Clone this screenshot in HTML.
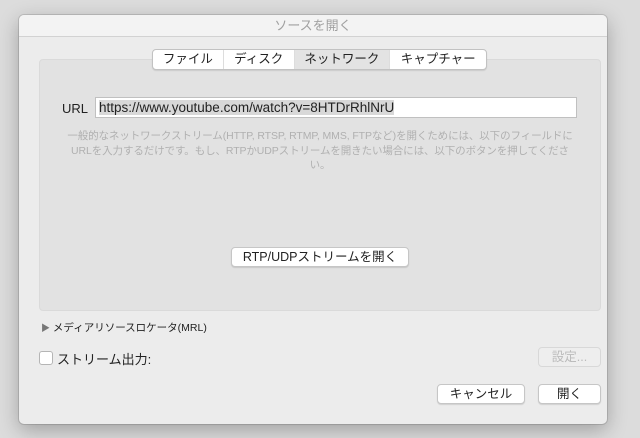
<!DOCTYPE html>
<html><head><meta charset="utf-8"><style>
*{margin:0;padding:0;box-sizing:border-box}
body{width:640px;height:438px;background:#dcdcdc;font-family:"Liberation Sans","Noto Sans CJK JP",sans-serif;position:relative;overflow:hidden}
.win{position:absolute;left:19px;top:15px;width:588px;height:409px;background:#ececec;border-radius:5px;box-shadow:0 6px 20px rgba(0,0,0,.28),0 0 0 1px rgba(0,0,0,.12)}
.title{position:absolute;left:0;top:0;width:588px;height:22px;border-bottom:1px solid #d2d2d2;background:#f3f3f3;border-radius:5px 5px 0 0;text-align:center;font-size:13px;color:#a0a0a0;line-height:22px}
.group{position:absolute;left:20px;top:44px;width:562px;height:252px;background:#e2e2e2;border-radius:4px;border:1px solid #dadada}
.tabs{position:absolute;left:133px;top:34px;width:335px;height:21px;background:#fff;border:1px solid #c2c2c2;border-radius:4px;display:flex;font-size:12.5px;overflow:hidden;box-shadow:0 1px 1px rgba(0,0,0,.1)}
.tabs div{text-align:center;line-height:19px;border-right:1px solid #ddd;color:#222}
.abs{position:absolute}
.btn{position:absolute;background:#fff;border:1px solid #c6c6c6;border-radius:4px;font-size:12.5px;text-align:center;line-height:18px;color:#222;box-shadow:0 1px 1px rgba(0,0,0,.12)}
.help{position:absolute;left:36px;width:530px;top:114px;text-align:center;font-size:10.5px;color:#b0b0b0;line-height:14.5px;letter-spacing:-0.1px}
</style></head><body>
<div class="win">
<div class="title">ソースを開く</div>
<div class="group"></div>
<div class="tabs"><div style="width:71px">ファイル</div><div style="width:71px">ディスク</div><div style="width:96px;background:#e3e3e3">ネットワーク</div><div style="width:96px;border:0">キャプチャー</div></div>
<div class="abs" style="left:43px;top:86px;font-size:13px;color:#222">URL</div>
<div class="abs" style="left:76px;top:82px;width:482px;height:21px;background:#fff;border:1px solid #c0c0c0;font-size:13.5px;line-height:19px;padding-left:3px"><span style="background:#d8d8d8;color:#222">https://www.youtube.com/watch?v=8HTDrRhlNrU</span></div>
<div class="help">一般的なネットワークストリーム(HTTP, RTSP, RTMP, MMS, FTPなど)を開くためには、以下のフィールドに<br>URLを入力するだけです。もし、RTPかUDPストリームを開きたい場合には、以下のボタンを押してくださ<br>い。</div>
<div class="btn" style="left:212px;top:232px;width:178px;height:20px">RTP/UDPストリームを開く</div>
<div class="abs" style="left:22px;top:305px;font-size:10.5px;color:#222"><span style="color:#777;font-size:9px">▶</span> メディアリソースロケータ(MRL)</div>
<div class="abs" style="left:20px;top:336px;width:14px;height:14px;background:#fff;border:1px solid #b5b5b5;border-radius:3px"></div>
<div class="abs" style="left:38px;top:334px;font-size:13px;color:#222">ストリーム出力:</div>
<div class="btn" style="left:519px;top:332px;width:63px;height:20px;color:#bbb;background:#eee;border-color:#d8d8d8;box-shadow:none">設定...</div>
<div class="btn" style="left:418px;top:369px;width:88px;height:20px">キャンセル</div>
<div class="btn" style="left:519px;top:369px;width:63px;height:20px">開く</div>
</div>
</body></html>
